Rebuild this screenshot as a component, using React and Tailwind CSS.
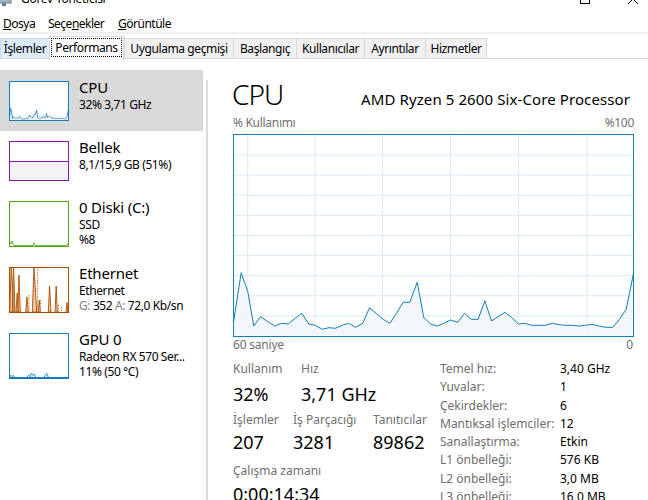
import React from "react";

const cpu = [
  [0, 188], [7.7, 138.7], [14.3, 157.7], [20.3, 192], [27, 182.7], [34.3, 187.7], [41.3, 192], [47.7, 189.3],
  [54.7, 190], [61.7, 184.3], [68.3, 179.3], [75.3, 190], [82, 191.3], [88.7, 195.3], [95.3, 193.7], [102, 194.3],
  [108.7, 191.3], [115.3, 189.3], [122, 193.3], [129.3, 189.3], [136, 173.7], [142.7, 179.3], [149.7, 185.3],
  [156.3, 189.3], [163, 179.3], [169.7, 168.3], [176.3, 168.3], [183.7, 148.3], [190.3, 183.7], [197, 190],
  [203.7, 192], [210.3, 189.3], [217, 186], [224.3, 188.3], [231, 179.3], [237.7, 185.3], [244.7, 185.3],
  [251.3, 166.7], [258, 187], [264.7, 182.7], [271.3, 178.3], [278, 183.3], [284.7, 190], [291.3, 189.3],
  [298, 191.3], [305.3, 191.3], [312, 191.3], [318.7, 189.3], [325.3, 190.7], [332, 191.3], [338.7, 191.3],
  [345.3, 192], [352, 191.3], [358.7, 190.3], [365.3, 192], [372.7, 193.3], [379.3, 193.3], [386, 185.3],
  [392.7, 175.3], [400, 139.3],
];

const bigLine = cpu.map(([x, y]) => `${x + 0.5},${y}`).join(" ");
const bigFill = `0.5,202 ${bigLine} 400.5,202`;
const miniLine = cpu.map(([x, y]) => `${(0.5 + (x * 59) / 400).toFixed(2)},${(0.5 + (y * 39) / 202).toFixed(2)}`).join(" ");
const miniFill = `0.5,39.5 ${miniLine} 59.5,39.5`;

function BigGraph() {
  const vx = [14.3, 81.7, 149, 217, 285, 353.7];
  const hy = [21.1, 41.2, 61.3, 81.4, 101.5, 121.6, 141.7, 161.8, 181.9];
  return (
    <svg width="401" height="203" viewBox="0 0 401 203" className="block">
      <rect x="0" y="0" width="401" height="203" fill="#ffffff" />
      {vx.map((x) => (
        <line key={"v" + x} x1={x + 0.5} y1="0" x2={x + 0.5} y2="203" stroke="#d9eaf4" strokeWidth="1" />
      ))}
      {hy.map((y) => (
        <line key={"h" + y} x1="0" y1={y} x2="401" y2={y} stroke="#d9eaf4" strokeWidth="1" />
      ))}
      <polygon points={bigFill} fill="#f1f6fa" fillOpacity="0.85" />
      <polyline points={bigLine} fill="none" stroke="#117dbb" strokeWidth="1" strokeLinejoin="round" />
      <rect x="0.5" y="0.5" width="400" height="202" fill="none" stroke="#117dbb" strokeWidth="1" />
    </svg>
  );
}

function CpuThumb() {
  return (
    <svg width="60" height="40" viewBox="0 0 60 40" className="block shrink-0">
      <rect x="0.5" y="0.5" width="59" height="39" fill="#ffffff" />
      <polygon points={miniFill} fill="#f1f6fa" />
      <polyline points={miniLine} fill="none" stroke="#117dbb" strokeWidth="0.8" />
      <rect x="0.5" y="0.5" width="59" height="39" fill="none" stroke="#117dbb" strokeWidth="1" />
    </svg>
  );
}

function MemThumb() {
  return (
    <svg width="60" height="40" viewBox="0 0 60 40" className="block shrink-0">
      <rect x="0.5" y="0.5" width="59" height="39" fill="#ffffff" />
      <rect x="0.5" y="20.5" width="59" height="19" fill="#f4f2f4" />
      <line x1="0.5" y1="20.5" x2="59.5" y2="20.5" stroke="#8b12ae" strokeWidth="1" />
      <rect x="0.5" y="0.5" width="59" height="39" fill="none" stroke="#8b12ae" strokeWidth="1" />
    </svg>
  );
}

function DiskThumb() {
  const pts = "0.5,44.5 1,41 2,42.5 3,40 4,43 5,44.5 24,44.5 25,42 26,44.5 57,44.5 58,43 59,44.5";
  return (
    <svg width="60" height="46" viewBox="0 0 60 46" className="block shrink-0">
      <rect x="0.5" y="0.5" width="59" height="45" fill="#ffffff" />
      <polygon points={pts} fill="#eff7e8" />
      <polyline points={pts} fill="none" stroke="#4da60c" strokeWidth="0.8" />
      <rect x="0.5" y="0.5" width="59" height="45" fill="none" stroke="#4da60c" strokeWidth="1" />
    </svg>
  );
}

function EthThumb() {
  const spikes = [
    [0.7, 2.2, 0, 5],
    [3.3, 4.5, 0, 6],
    [8.7, 10, 8, 11.3],
    [7, 8.2, 26, 9.3],
    [16.7, 18, 30, 19.3],
    [23.3, 25, 0, 27.7],
    [29.3, 30.3, 33, 31.3],
    [39.3, 40.6, 19, 42],
    [46, 47.2, 19, 48.3],
    [57, 58, 35.5, 59],
  ];
  const dashes = [
    [4.8, 0],
    [9.6, 10],
    [20, 28],
    [28.6, 0],
    [31.5, 33],
    [49.5, 38],
    [52.5, 40],
  ];
  return (
    <svg width="60" height="46" viewBox="0 0 60 46" className="block shrink-0">
      <rect x="0.5" y="0.5" width="59" height="45" fill="#ffffff" />
      {spikes.map(([a, p, y, b], i) => (
        <polygon
          key={i}
          points={`${a},45 ${p},${y} ${b},45`}
          fill="#e9a56f"
          fillOpacity="0.6"
          stroke="#a74f01"
          strokeWidth="0.9"
        />
      ))}
      {dashes.map(([x, y], i) => (
        <line key={"d" + i} x1={x} y1={y} x2={x} y2="45" stroke="#d9702a" strokeWidth="1" strokeDasharray="1.4 1.2" />
      ))}
      <rect x="0.5" y="0.5" width="59" height="45" fill="none" stroke="#a74f01" strokeWidth="1" />
    </svg>
  );
}

function GpuThumb() {
  const pts =
    "0.5,44.5 1.5,42 3,43.5 4.5,42.5 6,44.5 18,44.5 19.5,42 21,43.5 22.5,40 24,42.5 25.5,41 27,44.5 35,44.5 36.5,41.5 38,40.5 39.5,44.5 59.5,44.5";
  return (
    <svg width="60" height="46" viewBox="0 0 60 46" className="block shrink-0">
      <rect x="0.5" y="0.5" width="59" height="45" fill="#ffffff" />
      <polygon points={pts} fill="#e8f1f8" />
      <polyline points={pts} fill="none" stroke="#117dbb" strokeWidth="0.8" />
      <line x1="0.5" y1="44.5" x2="59.5" y2="44.5" stroke="#117dbb" strokeWidth="1.2" />
      <rect x="0.5" y="0.5" width="59" height="45" fill="none" stroke="#117dbb" strokeWidth="1" />
    </svg>
  );
}

function SideItem({ selected, thumb, title, lines }) {
  return (
    <div
      className={
        selected
          ? "flex w-[203px] pl-[9px] pt-[11px] pb-[10px] bg-[#d9d9d9]"
          : "flex w-[203px] pl-[9px] pt-[10px] pb-[10px]"
      }
    >
      {thumb}
      <div className="ml-[10px] -mt-[4px] whitespace-nowrap">
        <div className="text-[15px] leading-[20px] tracking-[-0.2px]">{title}</div>
        {lines.map((l, i) => (
          <div key={i} className="text-[12px] leading-[15px] tracking-[-0.4px]">
            {l}
          </div>
        ))}
      </div>
    </div>
  );
}

const tabs = [
  { label: "İşlemler", w: "w-[49px]", cls: "bg-[#dcecfc] border-[#c5dcf2]" },
  { label: "Performans", w: "w-[75px]", sel: true },
  { label: "Uygulama geçmişi", w: "w-[109px]" },
  { label: "Başlangıç", w: "w-[63px]" },
  { label: "Kullanıcılar", w: "w-[68px]" },
  { label: "Ayrıntılar", w: "w-[61px]" },
  { label: "Hizmetler", w: "w-[62px]", last: true },
];

export default function App() {
  return (
    <div className="w-[648px] h-[500px] overflow-hidden bg-white text-black font-['Noto_Sans',sans-serif]">
      {/* title bar (mostly cut off) */}
      <div className="h-[8px] overflow-hidden flex items-end">
        <div className="h-[18px] w-full shrink-0 flex items-center text-[12px] leading-[18px] tracking-[-0.3px]">
          <svg width="16" height="16" viewBox="0 0 16 16" className="ml-[-4px] shrink-0">
            <rect x="1" y="2" width="14" height="10" fill="#9fb6c9" stroke="#6b7d8c" />
            <rect x="6" y="12" width="4" height="3" fill="#6b7d8c" />
          </svg>
          <span className="ml-[9px]">Görev Yöneticisi</span>
          <div className="flex-1" />
          <svg width="10" height="10" viewBox="0 0 10 10" className="mr-[38px] shrink-0">
            <rect x="0.5" y="0.5" width="9" height="9" fill="none" stroke="#000" />
          </svg>
          <svg width="10" height="10" viewBox="0 0 10 10" className="mr-[10px] shrink-0">
            <path d="M0 0L10 10M10 0L0 10" stroke="#000" strokeWidth="1" />
          </svg>
        </div>
      </div>

      {/* menu bar */}
      <div className="h-[24px] pt-[8px] flex text-[12px] leading-[16px] tracking-[-0.5px]">
        <span className="ml-[3px] w-[45px]">
          <span className="underline">D</span>osya
        </span>
        <span className="w-[70px]">
          Seçe<span className="underline">n</span>ekler
        </span>
        <span>
          <span className="underline">G</span>örüntüle
        </span>
      </div>
      <div className="h-[2px] bg-[#f0f0f0]" />

      {/* tabs */}
      <div className="h-[25px] pt-[4px] border-b border-[#d9d9d9] flex text-[12px] tracking-[-0.4px]">
        {tabs.map((t) =>
          t.sel ? (
            <div
              key={t.label}
              className={`${t.w} relative z-10 -mt-[2px] -mb-[1px] h-[23px] bg-white border-t border-l border-r border-[#d9d9d9] flex items-start justify-center pt-[1px]`}
            >
              <span className="border border-dotted border-black px-[3px] leading-[17px]">{t.label}</span>
            </div>
          ) : (
            <div
              key={t.label}
              className={`${t.w} h-[20px] border-t border-l ${t.last ? "border-r" : ""} ${
                t.cls ? t.cls : "bg-[#f0f0f0] border-[#d9d9d9]"
              } flex items-center justify-center leading-[18px]`}
            >
              {t.label}
            </div>
          )
        )}
      </div>

      {/* main */}
      <div className="flex h-[441px]">
        {/* sidebar */}
        <div className="w-[206px] pt-[11px] shrink-0">
          <SideItem selected thumb={<CpuThumb />} title="CPU" lines={["32%  3,71 GHz"]} />
          <SideItem thumb={<MemThumb />} title="Bellek" lines={["8,1/15,9 GB (51%)"]} />
          <SideItem thumb={<DiskThumb />} title="0 Diski (C:)" lines={["SSD", "%8"]} />
          <SideItem
            thumb={<EthThumb />}
            title="Ethernet"
            lines={[
              "Ethernet",
              <span>
                <span className="text-[#808080]">G:</span> 352 <span className="text-[#808080]">A:</span> 72,0 Kb/sn
              </span>,
            ]}
          />
          <SideItem thumb={<GpuThumb />} title="GPU 0" lines={["Radeon RX 570 Ser...", "11% (50 °C)"]} />
        </div>
        <div className="w-[2px] mt-[21px] bg-[#dcdcdc] shrink-0" />

        {/* right panel */}
        <div className="flex-1 pl-[25px] pr-[14px] pt-[17px]">
          <div className="h-[36px] flex items-baseline justify-between">
            <span className="text-[28px] leading-[36px] font-light tracking-[-1px] -ml-[1px]">CPU</span>
            <span className="text-[15px] leading-[20px] mr-[4px] tracking-[0.1px]">AMD Ryzen 5 2600 Six-Core Processor</span>
          </div>
          <div className="mt-[3px] flex justify-between text-[12px] leading-[16px] text-[#707070] tracking-[-0.3px]">
            <span>% Kullanımı</span>
            <span>%100</span>
          </div>
          <div className="mt-[3px]">
            <BigGraph />
          </div>
          <div className="flex justify-between text-[12px] leading-[16px] text-[#707070] tracking-[-0.2px]">
            <span>60 saniye</span>
            <span className="mr-[1px]">0</span>
          </div>

          <div className="flex">
            {/* left stats */}
            <div className="w-[207px] shrink-0">
              <div className="mt-[8px] flex text-[12px] leading-[16px] text-[#707070]">
                <span className="w-[68px]">Kullanım</span>
                <span>Hız</span>
              </div>
              <div className="mt-[5px] flex text-[18px] leading-[24px]">
                <span className="w-[68px]">32%</span>
                <span>3,71 GHz</span>
              </div>
              <div className="mt-[6px] flex text-[12px] leading-[16px] text-[#707070]">
                <span className="w-[60px]">İşlemler</span>
                <span className="w-[80px]">İş Parçacığı</span>
                <span>Tanıtıcılar</span>
              </div>
              <div className="mt-[2px] flex text-[18px] leading-[24px]">
                <span className="w-[60px]">207</span>
                <span className="w-[80px]">3281</span>
                <span>89862</span>
              </div>
              <div className="mt-[9px] text-[12px] leading-[16px] text-[#707070]">Çalışma zamanı</div>
              <div className="mt-[3px] text-[18px] leading-[24px]">0:00:14:34</div>
            </div>

            {/* right stats */}
            <div className="mt-[7px] grid grid-cols-[120px_auto] text-[12px] leading-[18px] whitespace-nowrap">
              <span className="text-[#6d6d6d]">Temel hız:</span>
              <span>3,40 GHz</span>
              <span className="text-[#6d6d6d]">Yuvalar:</span>
              <span>1</span>
              <span className="text-[#6d6d6d]">Çekirdekler:</span>
              <span>6</span>
              <span className="text-[#6d6d6d]">Mantıksal işlemciler:</span>
              <span>12</span>
              <span className="text-[#6d6d6d]">Sanallaştırma:</span>
              <span>Etkin</span>
              <span className="text-[#6d6d6d]">L1 önbelleği:</span>
              <span>576 KB</span>
              <span className="text-[#6d6d6d]">L2 önbelleği:</span>
              <span>3,0 MB</span>
              <span className="text-[#6d6d6d]">L3 önbelleği:</span>
              <span>16,0 MB</span>
            </div>
          </div>
        </div>
      </div>
    </div>
  );
}
